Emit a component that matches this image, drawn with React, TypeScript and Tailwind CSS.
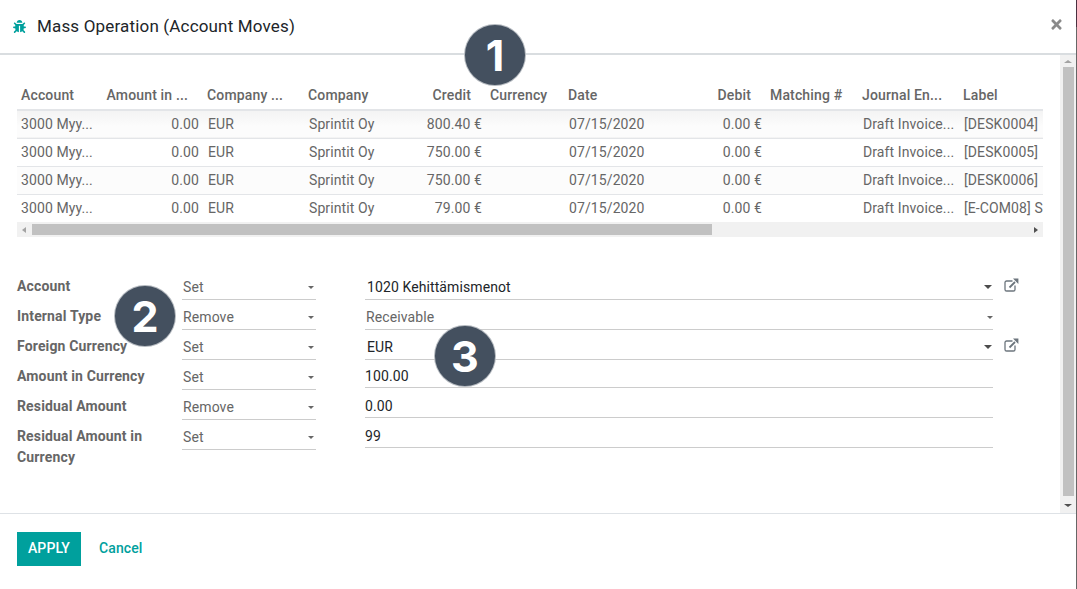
import React from "react";
import { FaBug, FaTimes } from "react-icons/fa";

const cols = [
  { w: 84, h: "Account", align: "l" },
  { w: 102, h: "Amount in ...", align: "r" },
  { w: 101, h: "Company ...", align: "l" },
  { w: 101, h: "Company", align: "l" },
  { w: 81, h: "Credit", align: "r" },
  { w: 78, h: "Currency", align: "l" },
  { w: 123, h: "Date", align: "l" },
  { w: 79, h: "Debit", align: "r" },
  { w: 92, h: "Matching #", align: "l" },
  { w: 101, h: "Journal En...", align: "l" },
  { w: 84, h: "Label", align: "l" },
];

const rows = [
  ["3000 Myy...", "0.00", "EUR", "Sprintit Oy", "800.40 €", "", "07/15/2020", "0.00 €", "", "Draft Invoice...", "[DESK0004]"],
  ["3000 Myy...", "0.00", "EUR", "Sprintit Oy", "750.00 €", "", "07/15/2020", "0.00 €", "", "Draft Invoice...", "[DESK0005]"],
  ["3000 Myy...", "0.00", "EUR", "Sprintit Oy", "750.00 €", "", "07/15/2020", "0.00 €", "", "Draft Invoice...", "[DESK0006]"],
  ["3000 Myy...", "0.00", "EUR", "Sprintit Oy", "79.00 €", "", "07/15/2020", "0.00 €", "", "Draft Invoice...", "[E-COM08] S"],
];

const form = [
  { label: "Account", op: "Set", value: "1020 Kehittämismenot", kind: "m2o" },
  { label: "Internal Type", op: "Remove", value: "Receivable", kind: "sel" },
  { label: "Foreign Currency", op: "Set", value: "EUR", kind: "m2o" },
  { label: "Amount in Currency", op: "Set", value: "100.00", kind: "num" },
  { label: "Residual Amount", op: "Remove", value: "0.00", kind: "num" },
  { label: "Residual Amount in Currency", op: "Set", value: "99", kind: "num" },
];

function Caret({ big }: { big?: boolean }) {
  return big ? (
    <span className="border-x-[4.5px] border-t-[4.5px] border-x-transparent border-t-[#4c4c4c]" />
  ) : (
    <span className="border-x-[3px] border-t-[3px] border-x-transparent border-t-[#666666]" />
  );
}

function ExternalLink() {
  return (
    <svg viewBox="0 0 15 14" className="mt-[7px] ml-[11px] h-[14px] w-[15px] shrink-0" fill="none">
      <path d="M8.5 3H2.6C1.7 3 1 3.7 1 4.6v6.8c0 .9.7 1.6 1.6 1.6h6.8c.9 0 1.6-.7 1.6-1.6V7.5" stroke="#6c757d" strokeWidth="1.3" />
      <path d="M5.5 9.5 11 4" stroke="#6c757d" strokeWidth="1.8" />
      <path d="M9 .6h5.4V6L12.4 4 9 .6Z" fill="#6c757d" />
    </svg>
  );
}

function Badge({ n, className }: { n: string; className: string }) {
  return (
    <div
      className={`absolute flex h-[62px] w-[62px] items-center justify-center rounded-full border border-white/60 bg-[#44505f] font-['Inter',sans-serif] text-[43px] leading-none font-bold tracking-normal text-white ${className}`}
    >
      {n}
    </div>
  );
}

export default function App() {
  return (
    <div className="relative flex h-[589px] w-[1077px] flex-col overflow-hidden bg-white pr-px font-['Roboto',sans-serif] text-[14px] tracking-[0.1px] text-[#666666]">
      <header className="flex h-[55px] shrink-0 items-center border-b-2 border-b-[#d9dde0] pr-[12px] pl-[13px]">
        <FaBug className="h-[13px] w-[13px] text-[#00a09d]" />
        <h1 className="ml-[11px] flex-1 text-[17px] leading-none tracking-[0.17px] text-[#212529]">Mass Operation (Account Moves)</h1>
        <FaTimes className="mb-[5px] h-[15px] w-[15px] text-[#8a8a8a]" />
      </header>

      <div className="flex min-h-0 flex-1 border-b border-b-[#dee2e6]">
        <main className="min-w-0 flex-1 pt-[27px] pl-[17px]">
          <div className="w-[1026px] overflow-hidden">
            <table className="w-[1026px] table-fixed border-collapse">
              <colgroup>
                {cols.map((c) => (
                  <col key={c.h} style={{ width: c.w }} />
                ))}
              </colgroup>
              <thead>
                <tr className="h-[28px] border-b-2 border-b-[#e3e5e8]">
                  {cols.map((c) => (
                    <th
                      key={c.h}
                      className={`p-0 pb-[1px] pl-[4px] font-medium tracking-[0.15px] whitespace-nowrap ${c.align === "r" ? "pr-[15px] text-right" : "text-left"}`}
                    >
                      {c.h}
                    </th>
                  ))}
                </tr>
              </thead>
              <tbody>
                {rows.map((r, i) => (
                  <tr
                    key={i}
                    className={`h-[28px] border-b border-b-[#e3e5e8] last:border-b-0 ${i === 0 ? "bg-[linear-gradient(#f3f3f3,#fcfcfc_60%)]" : i % 2 === 0 ? "bg-[#fcfcfc]" : "bg-white"}`}
                  >
                    {r.map((v, j) => (
                      <td
                        key={j}
                        className={`overflow-hidden p-0 whitespace-nowrap ${j === 0 ? "pl-[4px]" : "pl-[5px]"} ${cols[j].align === "r" ? "pr-[4px] text-right" : "text-left"}`}
                      >
                        {v}
                      </td>
                    ))}
                  </tr>
                ))}
              </tbody>
            </table>
            <div className="flex h-[15px] items-center bg-[#f1f1f1]">
              <span className="mr-[6px] ml-[5px] border-y-[3px] border-r-[4px] border-y-transparent border-r-[#a3a3a3]" />
              <div className="h-[11px] w-[680px] bg-[#c1c1c1]" />
              <div className="flex-1" />
              <span className="mr-[5px] border-y-[3px] border-l-[4px] border-y-transparent border-l-[#505050]" />
            </div>
          </div>

          <div className="mt-[34px] flex flex-col">
            {form.map((f) => (
              <div key={f.label} className="flex h-[30px] items-start">
                <label className="w-[165px] shrink-0 pt-[5px] pr-[16px] text-[14px] leading-[21px] font-bold tracking-[0.15px]">{f.label}</label>
                <div className="flex h-[29px] w-[134px] shrink-0 items-center justify-between border-b border-b-[#ccc] px-[1px] pt-[4px]">
                  <span className="pt-[1px]">{f.op}</span>
                  <span className="mr-[1px] flex"><Caret /></span>
                </div>
                <div
                  className={`ml-[49px] flex w-[628px] shrink-0 items-center justify-between border-b border-b-[#ccc] pt-[4px] ${f.kind === "num" ? "h-[27px] text-[#212529]" : "h-[29px]"} ${f.kind === "m2o" ? "pr-[1px] pl-[2px] text-[#212529]" : f.kind === "sel" ? "pl-[1px]" : ""}`}
                >
                  <span>{f.value}</span>
                  {f.kind === "m2o" && <span className="flex"><Caret big /></span>}
                  {f.kind === "sel" && <span className="flex"><Caret /></span>}
                </div>
                {f.kind === "m2o" && <ExternalLink />}
              </div>
            ))}
          </div>
        </main>

        <aside className="flex w-[16px] shrink-0 flex-col items-center bg-[#f1f1f1]">
          <span className="mt-[5px] mb-[4px] border-x-[4px] border-b-[3px] border-x-transparent border-b-[#a3a3a3]" />
          <div className="w-[11px] flex-1 bg-[#c1c1c1]" />
          <span className="mt-[8px] mb-[6px] border-x-[4px] border-t-[3px] border-x-transparent border-t-[#505050]" />
        </aside>
      </div>

      <footer className="flex h-[75px] shrink-0 items-start pt-[18px] pl-[17px]">
        <button className="h-[34px] w-[64px] bg-[#00a09d] pb-[2px] text-[14px] leading-none font-medium text-white">APPLY</button>
        <button className="ml-[18px] h-[34px] pb-[2px] text-[14px] font-medium text-[#00a09d]">Cancel</button>
      </footer>

      <div className="absolute top-0 right-0 h-[27px] w-px bg-[#4a3040]" />
      <div className="absolute top-[27px] right-0 bottom-0 w-px bg-[#666666]" />

      <Badge n="1" className="top-[24px] left-[464px]" />
      <Badge n="2" className="top-[285px] left-[114px]" />
      <Badge n="3" className="top-[325px] left-[434px]" />
    </div>
  );
}
